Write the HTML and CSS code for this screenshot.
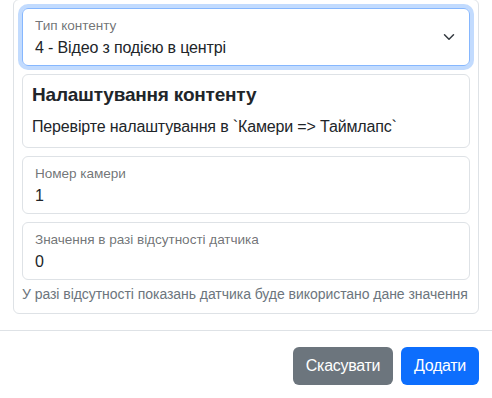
FILE: index.html
```html
<!DOCTYPE html>
<html lang="uk">
<head>
  <meta charset="UTF-8">
  <meta name="viewport" content="width=device-width, initial-scale=1.0">
  <title>Додати контент</title>
  <link rel="stylesheet" href="styles.css">
</head>
<body>
  <div class="modal">
    <div class="modal_body">
      <div class="card">
        <!-- content type -->
        <div class="floating focused">
          <div class="field_label">Тип контенту</div>
          <div class="field_value">4 - Відео з подією в центрі</div>
          <svg class="chevron" width="16" height="12" viewBox="0 0 16 16">
            <path d="m2 5 6 6 6-6" fill="none" stroke="#343a40" stroke-linecap="round" stroke-linejoin="round" stroke-width="2"/>
          </svg>
        </div>

        <div class="info">
          <h5>Налаштування контенту</h5>
          <p>Перевірте налаштування в `Камери =&gt; Таймлапс`</p>
        </div>

        <div class="floating">
          <div class="field_label">Номер камери</div>
          <div class="field_value">1</div>
        </div>

        <div class="floating">
          <div class="field_label">Значення в разі відсутності датчика</div>
          <div class="field_value">0</div>
        </div>
        <div class="form_text">У разі відсутності показань датчика буде використано дане значення</div>
      </div>
    </div>
    <div class="modal_footer">
      <button class="btn btn_secondary">Скасувати</button>
      <button class="btn btn_primary">Додати</button>
    </div>
  </div>
</body>
</html>
```

FILE: styles.css
```css
html {
  box-sizing: border-box;
}
*, *:before, *:after {
  box-sizing: inherit;
}
body {
  margin: 0;
  font-family: "Segoe UI", "Liberation Sans", "Noto Sans", sans-serif;
  font-size: 16px;
  line-height: 1.5;
  letter-spacing: -0.15px;
  color: #212529;
  background: #fff;
  overflow: hidden;
}
.modal {
  width: 492px;
}
.modal_body {
  padding: 0 13px 16px 13px;
}
.card {
  margin-top: -1px;
  border: 1px solid #dee2e6;
  border-radius: 6px;
  padding: 8px;
}
.floating {
  position: relative;
  height: 58px;
  border: 1px solid #dee2e6;
  border-radius: 6px;
  padding: 0 12px;
  margin-bottom: 8px;
}
.floating.focused {
  border-color: #86b7fe;
  box-shadow: 0 0 0 4px rgba(13, 110, 253, 0.25);
}
.field_label {
  font-size: 13.6px;
  line-height: 20px;
  padding-top: 7px;
  letter-spacing: -0.05px;
  color: rgba(33, 37, 41, 0.65);
  white-space: nowrap;
}
.field_value {
  line-height: 24px;
}
.chevron {
  position: absolute;
  right: 12px;
  top: 22px;
}
.info {
  border: 1px solid #dee2e6;
  border-radius: 6px;
  padding: 8px 9px;
  margin-bottom: 8px;
}
.info h5 {
  margin: 0 0 8px 0;
  font-size: 19px;
  font-weight: 600;
  line-height: 24px;
  letter-spacing: -0.2px;
  color: #212529;
}
.info p {
  margin: 0;
}
.form_text {
  margin-top: -4px;
  font-size: 14px;
  line-height: 21px;
  letter-spacing: -0.05px;
  color: #6c757d;
  white-space: nowrap;
}
.modal_footer {
  border-top: 1px solid #dee2e6;
  padding: 16px 13px 13px 12px;
  display: flex;
  justify-content: flex-end;
  gap: 8px;
}
.btn {
  font-family: inherit;
  font-size: 16px;
  line-height: 24px;
  letter-spacing: -0.3px;
  padding: 6px 12px;
  border: 1px solid transparent;
  border-radius: 6px;
  color: #fff;
}
.btn_secondary {
  background-color: #6c757d;
}
.btn_primary {
  background-color: #0d6efd;
}
```
